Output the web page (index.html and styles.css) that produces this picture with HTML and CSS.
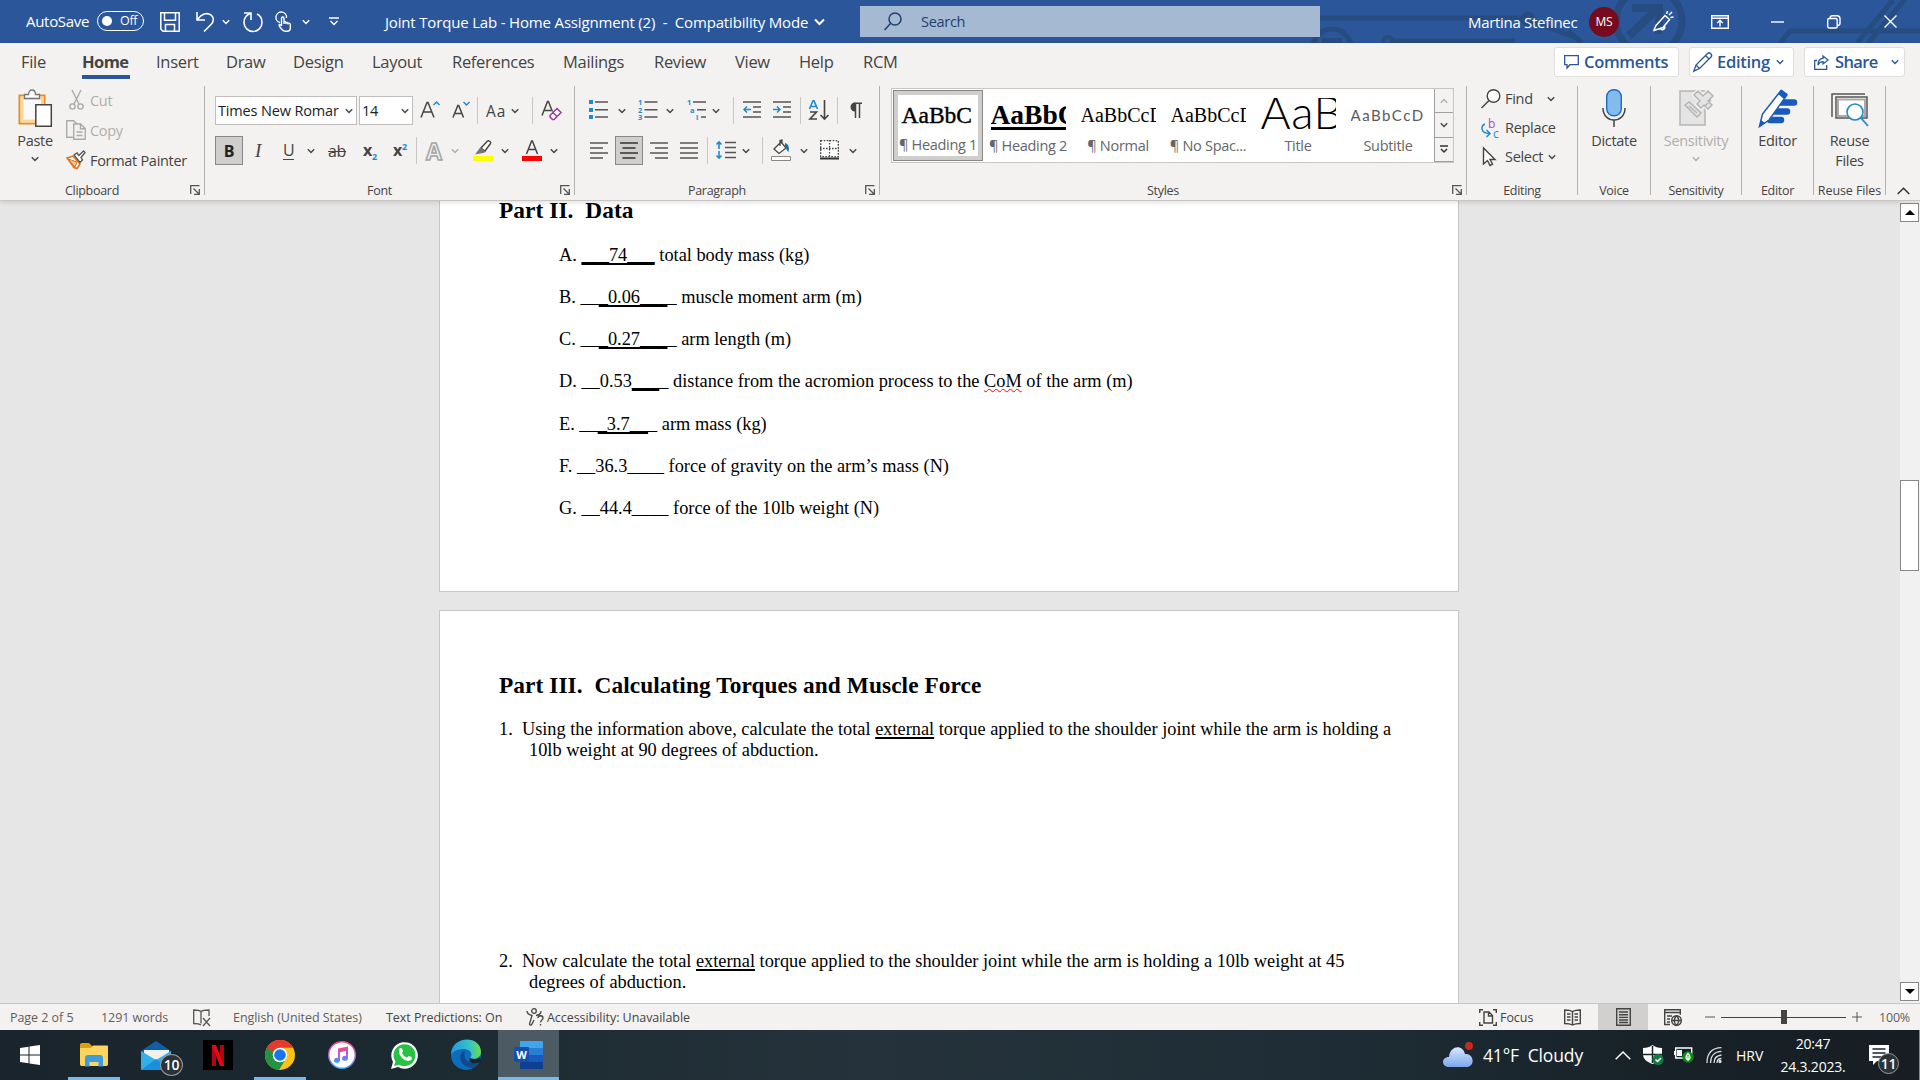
FILE: index.html
```html
<!DOCTYPE html>
<html lang="en">
<head>
  <meta charset="utf-8" />
  <title>Joint Torque Lab - Home Assignment (2)</title>
  <link rel="stylesheet" href="styles.css">
</head>
<body>
  <svg class="defs">
    <symbol id="chev" viewBox="0 0 8 6"><path d="M.8 1.2 4 4.4 7.2 1.2" fill="none" stroke="currentColor" stroke-width="1.4"/></symbol>
    <symbol id="launch" viewBox="0 0 10 10"><path d="M.7 9V.7H9.5M3.5 3.5l5.5 5.5M9.3 4v5.3H4" fill="none" stroke="#555" stroke-width="1.3"/></symbol>
  </svg>

  <div class="titlebar">
    <svg class="circuit" width="620" height="43" viewBox="0 0 620 43" fill="none" stroke="#264c80" stroke-width="5">
      <path d="M20 18H222M268 31l14 12M90 41h125"/>
      <circle cx="32" cy="48" r="19"/><path d="M22 41h20" stroke-width="6"/>
      <circle cx="88" cy="42" r="5" stroke-width="4"/><circle cx="228" cy="19" r="5"/>
      <path d="M234 22l40 15"/>
      <circle cx="349" cy="21" r="33" stroke-width="7"/>
      <path d="M332 8h27v26M357 9l-28 27" stroke-width="8"/>
      <path d="M480 43l10-12h132M557 43l36-43M568 43l42-50"/>
    </svg>
    <span class="autosave">AutoSave</span>
    <span class="toggle"><i></i>Off</span>
    <svg width="20" height="20" fill="none" stroke="#fff" stroke-width="1.5"><path d="M.8.8h18.4v18.4H3L.8 17zM4.5.8v7.5h11V.8M5.5 19v-6.500h9V19"/></svg>
    <svg width="19" height="20" fill="none" stroke="#fff" stroke-width="1.6"><path d="M1 0v8h8M1.500 7.500C5 2 11 0 15 3c4 3.500 2 7.500 0 9.500L8 19.500"/></svg>
    <svg class="chev" width="8" height="6"><use href="#chev"/></svg>
    <svg width="20" height="20" fill="none" stroke="#fff" stroke-width="1.6"><path d="M1 1h7v7M7.500 1.500C3 3 1 6 1 10.500a9 9 0 0 0 18 0c0-4-2-7-5-8.500"/></svg>
    <svg width="16" height="20" fill="none" stroke="#fff" stroke-width="1.400"><path d="M4 10.500A5.300 5.300 0 1 1 10.500 6M5.500 14V6.500c0-2 2.500-2 2.500 0V12M8 11c0-1.800 2-1.500 2 0v1M10 11.500c0-1.500 2-1.200 2 0v1M12 12c0-1.500 2.300-1 2.300 .5V16c0 2-1.300 3.300-3 3.300H9C7 19.300 3 14.500 3 13c.5-.8 1.500-.5 2.500 1"/></svg>
    <svg class="chev" width="8" height="6"><use href="#chev"/></svg>
    <svg width="10" height="9" fill="none" stroke="#fff" stroke-width="1.400"><path d="M0 1h10M1.500 4 5 7.500 8.500 4"/></svg>
    <span class="doc-name">Joint Torque Lab - Home Assignment (2) &nbsp;-&nbsp; Compatibility Mode</span>
    <svg class="chev" width="11" height="8"><path d="M1 1.500l4.500 4.500L10 1.500" fill="none" stroke="#fff" stroke-width="2"/></svg>
    <div class="search">
      <svg width="18" height="19" fill="none" stroke="#1e4072" stroke-width="1.500"><circle cx="11" cy="7" r="6"/><path d="M6.500 11.500.5 18"/></svg>
      <span>Search</span>
    </div>
    <span class="user">Martina Stefinec</span>
    <span class="avatar">MS</span>
    <svg width="21" height="21" fill="none" stroke="#fff" stroke-width="1.500"><path d="M1 19 3 14.500 12 4.500l4.500 4L10 16.500 1 19.500zM7.500 17.500c1 2 4.500 1.500 4.500-2M13.500 3l1-3M16 4l3-3M17.500 6.500l3-.5"/></svg>
    <svg width="18" height="14" fill="none" stroke="#fff" stroke-width="1.400"><path d="M.7.7h16.600v12.600H.7zM.7 3.200h16.600M9 11.500V5.500M6.300 8 9 5.300 11.700 8"/></svg>
    <svg width="13" height="2"><path d="M0 1h13" stroke="#fff" stroke-width="1.400"/></svg>
    <svg width="14" height="14" fill="none" stroke="#fff" stroke-width="1.400"><rect x=".7" y="3.500" width="9.500" height="9.500" rx="1.500"/><path d="M3 3.500C3 1.500 4 .7 5.500.7H10c2 0 3 1 3 3V8c0 1.500-1 2.500-2.500 2.500"/></svg>
    <svg width="13" height="13"><path d="M.5.500l12 12M12.500.5l-12 12" stroke="#fff" stroke-width="1.400"/></svg>
  </div>

  <div class="ribbon">
    <div class="tabs">
      <span>File</span><span class="active">Home</span><span>Insert</span><span>Draw</span><span>Design</span><span>Layout</span><span>References</span><span>Mailings</span><span>Review</span><span>View</span><span>Help</span><span>RCM</span>
      <div class="actions">
        <span class="action comments"><svg width="15" height="14" fill="none" stroke="#2b579a" stroke-width="1.300"><path d="M.7.7h13.600v9H6L3 13V9.700H.7z"/></svg><b>Comments</b></span>
        <span class="action editing"><svg width="20" height="20" fill="none" stroke="#2b579a" stroke-width="1.300"><path d="M.8 19.200 3 13 14.500 1.500c2-2 5.500 1.500 3.500 3.500L6.500 16.500zM3 13l3.500 3.500M12.500 3.500 16 7"/></svg><b>Editing</b><svg class="chev" width="8" height="6"><use href="#chev"/></svg></span>
        <span class="action share"><svg width="15" height="15" fill="none" stroke="#2b579a" stroke-width="1.300"><path d="M3 5.500H.7v8.800h12V10M9 1l5 4-5 4V6.700C6.500 6.700 5 8 4 10c0-4 2-6.500 5-6.700z"/></svg><b>Share</b><svg class="chev" width="8" height="6"><use href="#chev"/></svg></span>
      </div>
    </div>

    <div class="groups">
      <div class="group clipboard">
        <div class="tools">
          <div class="big">
            <svg width="35" height="38" fill="none"><path d="M1.500 6.500h25v28h-25z" fill="#fafafa" stroke="#e8892b" stroke-width="2"/><path d="M4 9h20.500v23H4z" stroke="#fbd78c" stroke-width="3"/><path d="M6.500 9.500v-4h4c0-6 7-6 7 0h4v4z" fill="#fafafa" stroke="#777" stroke-width="1.300"/><path d="M17.800 15.700h15.500v21.500H17.800z" fill="#fff" stroke="#444" stroke-width="1.500"/></svg>
            <span>Paste</span>
            <svg class="chev" width="8" height="6"><use href="#chev"/></svg>
          </div>
          <div class="clip-list">
            <span class="off"><svg width="20" height="20" fill="none" stroke="#aaa" stroke-width="1.400"><path d="M6 0l7 14M15 0 8 14"/><circle cx="6.500" cy="16.500" r="2.600"/><circle cx="14.500" cy="16.500" r="2.600"/></svg>Cut</span>
            <span class="off"><svg width="20" height="20" fill="#f3f2f1" stroke="#aaa" stroke-width="1.400"><path d="M.7.700h7l3 3v13.500H.7z"/><path d="M7.700 4h7l4.500 4.500v10.700H7.700zM14.500 4v4.700h4.700M10.500 12h6M10.500 15.500h6"/></svg>Copy</span>
            <span><svg width="20" height="20" fill="none"><path d="M1 8l6-2 7 8-3 4.500-3-1z" fill="#fff" stroke="#e0701a" stroke-width="1.500"/><path d="M2 9l9 3-2 5z" fill="#f9c98c" stroke="#e0701a"/><path d="M8 5l3-2 2 2.500L17.500 1 19 2.500 15 7.500l1.500 2.500-2.500 2.500z" fill="#fff" stroke="#555" stroke-width="1.400"/></svg>Format Painter</span>
          </div>
        </div>
        <div class="caption">Clipboard<svg class="launch" width="10" height="10"><use href="#launch"/></svg></div>
      </div>

      <div class="group font">
        <div class="tools rows">
          <div class="row font-row1">
            <span class="combo name">Times New Romar<svg class="chev" width="8" height="6"><use href="#chev"/></svg></span>
            <span class="combo size">14<svg class="chev" width="8" height="6"><use href="#chev"/></svg></span>
            <svg width="20" height="20" fill="none"><path d="M1 17.500 7 2.500h1l6 15M3.300 12h8.500" stroke="#444" stroke-width="1.500"/><path d="M13.500 5l3-3 3 3" stroke="#1e8bcd" stroke-width="1.500"/></svg>
            <svg width="20" height="20" fill="none"><path d="M1 17.500 5.800 5.500h.9l4.800 12M2.500 13.500h7.500" stroke="#444" stroke-width="1.500"/><path d="M11.500 2l3 3 3-3" stroke="#1e8bcd" stroke-width="1.500"/></svg>
            <i class="sep"></i>
            <span class="aa">Aa</span>
            <svg class="chev" width="8" height="6"><use href="#chev"/></svg>
            <i class="sep"></i>
            <svg width="21" height="20" fill="none"><path d="M1 15.500 6.500 1.500h.9l4 10M3 10.500h7" stroke="#444" stroke-width="1.500"/><path d="M9 15.500l7-7 4 4-7 7H11.500L9 17zM12 12.500l4 4" fill="#fff" stroke="#9b35a5" stroke-width="1.500"/></svg>
          </div>
          <div class="row font-row2">
            <span class="bold pressed">B</span>
            <span class="italic">I</span>
            <span class="under">U</span>
            <svg class="chev" width="8" height="6"><use href="#chev"/></svg>
            <span class="strike">ab</span>
            <span class="script">x<sub>2</sub></span>
            <span class="script">x<sup>2</sup></span>
            <i class="sep"></i>
            <span class="outline">A</span>
            <svg class="chev off" width="8" height="6"><use href="#chev"/></svg>
            <svg width="20" height="22"><path d="M0 17h20v5H0z" fill="#ff0"/><path d="M8 9l6.500-7c1-1 4 1 3 2.500L12 12z" fill="#fff" stroke="#444" stroke-width="1.400"/><path d="M7.500 8 13 13l-3 1-8 1.500z" fill="#777"/></svg>
            <svg class="chev" width="8" height="6"><use href="#chev"/></svg>
            <svg width="20" height="22"><path d="M0 17h20v5H0z" fill="#f00"/><path d="M4.500 15 9.600 2h.8l5.100 13M6.500 10.500h7" fill="none" stroke="#444" stroke-width="1.500"/></svg>
            <svg class="chev" width="8" height="6"><use href="#chev"/></svg>
          </div>
        </div>
        <div class="caption">Font<svg class="launch" width="10" height="10"><use href="#launch"/></svg></div>
      </div>

      <div class="group para">
        <div class="tools rows">
          <div class="row para-row1">
            <svg width="20" height="20"><path d="M0 0h4v4H0zM0 8h4v4H0zM0 15h4v4H0z" fill="#1e8bcd"/><path d="M6 2h13M6 9.700h13M6 17h13" stroke="#555" stroke-width="1.500"/></svg>
            <svg class="chev" width="8" height="6"><use href="#chev"/></svg>
            <svg width="20" height="20"><text x="0" y="5" class="tiny">1</text><text x="0" y="12.500" class="tiny">2</text><text x="0" y="19.500" class="tiny">3</text><path d="M6.500 2h13M6.500 9.700h13M6.500 17h13" stroke="#555" stroke-width="1.500"/></svg>
            <svg class="chev" width="8" height="6"><use href="#chev"/></svg>
            <svg width="20" height="20"><text x="0" y="5" class="tiny">1</text><text x="3" y="12.500" class="tiny">a</text><text x="9" y="19.500" class="tiny">i</text><path d="M6 2h13M10 9.700h9M14 17h5" stroke="#555" stroke-width="1.500"/></svg>
            <svg class="chev" width="8" height="6"><use href="#chev"/></svg>
            <i class="sep"></i>
            <svg width="18" height="20" fill="none"><path d="M0 2h18M10 7h8M10 12h8M0 17h18" stroke="#555" stroke-width="1.500"/><path d="M1 9.500h7M4 6.500l-3 3 3 3" stroke="#1e8bcd" stroke-width="1.500"/></svg>
            <svg width="18" height="20" fill="none"><path d="M0 2h18M10 7h8M10 12h8M0 17h18" stroke="#555" stroke-width="1.500"/><path d="M0 9.500h7M4 6.500l3 3-3 3" stroke="#1e8bcd" stroke-width="1.500"/></svg>
            <i class="sep"></i>
            <svg width="20" height="20" fill="none"><path d="M.5 9 4 .7h1L8.500 9M2 6.500h5" stroke="#1e8bcd" stroke-width="1.600"/><path d="M1 12h6.500L1 19h7M15.500 0v19M11.500 15l4 4 4-4" stroke="#444" stroke-width="1.600"/></svg>
            <i class="sep"></i>
            <svg width="14" height="17"><path d="M6 9.500a4.500 4.500 0 0 1 0-9z" fill="#444"/><path d="M5 1.200h8M6.500 1v15M10.500 1v15" stroke="#444" stroke-width="1.500"/></svg>
          </div>
          <div class="row para-row2">
            <svg width="19" height="17"><path d="M1 1h18M1 6h13M1 11h18M1 16h13" stroke="#555" stroke-width="1.600"/></svg>
            <span class="pressed"><svg width="18" height="17"><path d="M0 1h18M2.500 6h13M0 11h18M2.500 16h13" stroke="#333" stroke-width="1.600"/></svg></span>
            <svg width="18" height="17"><path d="M0 1h18M5 6h13M0 11h18M5 16h13" stroke="#555" stroke-width="1.600"/></svg>
            <svg width="18" height="17"><path d="M0 1h18M0 6h18M0 11h18M0 16h18" stroke="#555" stroke-width="1.600"/></svg>
            <i class="sep"></i>
            <svg width="20" height="18" fill="none"><path d="M9 1.500h11M9 6.500h11M9 11.500h11M9 16.500h11" stroke="#555" stroke-width="1.500"/><path d="M3 1v7M3 10v7M.5 3.500 3 1l2.500 2.500M.5 14.500 3 17l2.500-2.500" stroke="#1e8bcd" stroke-width="1.600"/></svg>
            <svg class="chev" width="8" height="6"><use href="#chev"/></svg>
            <i class="sep"></i>
            <svg width="20" height="22" fill="none"><path d="M.5 17.500h19v4H.5z" fill="#fff" stroke="#888"/><path d="M3 10 10 3l5 6-7 5.500zM9 7V1.500l2-.5v4" fill="#fff" stroke="#444" stroke-width="1.300"/><path d="M14 4c4 1 4.500 5 3.500 9-1.500-1-2.500-4-3.500-6z" fill="#1e6fae"/></svg>
            <svg class="chev" width="8" height="6"><use href="#chev"/></svg>
            <svg width="19" height="20"><path d="M.7.700h17.600v16H.7zM9.500 0v17M0 8.500h19" fill="#fff" stroke="#444" stroke-width="1.300" stroke-dasharray="1.600 1.400"/><path d="M0 18.500h19" stroke="#333" stroke-width="2"/></svg>
            <svg class="chev" width="8" height="6"><use href="#chev"/></svg>
          </div>
        </div>
        <div class="caption">Paragraph<svg class="launch" width="10" height="10"><use href="#launch"/></svg></div>
      </div>

      <div class="group styles">
        <div class="tools">
          <div class="gallery">
            <div class="style selected"><span class="sample h1">AaBbC</span><span class="style-name">¶ Heading 1</span></div>
            <div class="style"><span class="sample h2">AaBbC</span><span class="style-name">¶ Heading 2</span></div>
            <div class="style"><span class="sample normal">AaBbCcD</span><span class="style-name">¶ Normal</span></div>
            <div class="style"><span class="sample normal">AaBbCcD</span><span class="style-name">¶ No Spac...</span></div>
            <div class="style"><span class="sample title">AaB</span><span class="style-name">Title</span></div>
            <div class="style"><span class="sample subtitle">AaBbCcD</span><span class="style-name">Subtitle</span></div>
            <div class="gallery-nav">
              <span class="off"><svg class="up" width="8" height="6"><use href="#chev"/></svg></span>
              <span><svg width="8" height="6"><use href="#chev"/></svg></span>
              <span><svg width="10" height="9" fill="none" stroke="#333" stroke-width="1.500"><path d="M1 1h8M2 4l3 3 3-3"/></svg></span>
            </div>
          </div>
        </div>
        <div class="caption">Styles<svg class="launch" width="10" height="10"><use href="#launch"/></svg></div>
      </div>

      <div class="group edit">
        <div class="tools edit-list">
          <span><svg width="20" height="20" fill="#fff" stroke="#444" stroke-width="1.400"><circle cx="12.500" cy="7" r="6.300"/><path d="M8 11.500.5 19"/></svg>Find<svg class="chev find-chev" width="8" height="6"><use href="#chev"/></svg></span>
          <span><svg width="20" height="20" fill="none"><text x="7" y="10" class="rep-b">b</text><text x="12" y="19.500" class="rep-c">c</text><path d="M4 6C-.5 8-.5 15 8 15.500M5.500 12l3.500 3.500L5.500 19" stroke="#1e8bcd" stroke-width="1.500"/></svg>Replace</span>
          <span><svg width="20" height="20"><path d="M2.500 1v16l4-3.500 2.500 5 2.500-1.200L9 12.500h5z" fill="#fff" stroke="#444" stroke-width="1.400"/></svg>Select<svg class="chev select-chev" width="8" height="6"><use href="#chev"/></svg></span>
        </div>
        <div class="caption">Editing</div>
      </div>

      <div class="group voice">
        <div class="tools big">
          <svg width="24" height="38" fill="none"><rect x="4.700" y=".7" width="14.600" height="26" rx="7" fill="#83bbec" stroke="#1b6ec2" stroke-width="1.400"/><path d="M1 19c0 16 22 16 22 0M12 31v7" stroke="#444" stroke-width="1.500"/></svg>
          <span>Dictate</span>
        </div>
        <div class="caption">Voice</div>
      </div>

      <div class="group sens">
        <div class="tools big off">
          <svg width="35" height="38" fill="#e4e4e4" stroke="#b5b5b5" stroke-width="1.500"><path d="M1 2h25v34H1z"/><path d="M6 16l4-3 12 11-4 4zM10 17l8 7"/><path d="M15 6l4-4 5 5 5-5 5 5-5 5 4 4-4 4-4-4-3 3-4-4 3-3z" stroke="#f3f2f1" stroke-width="4"/><path d="M15 6l4-4 5 5 5-5 5 5-5 5 4 4-4 4-4-4-3 3-4-4 3-3zM26 17l6-6"/></svg>
          <span>Sensitivity</span>
          <svg class="chev" width="8" height="6"><use href="#chev"/></svg>
        </div>
        <div class="caption">Sensitivity</div>
      </div>

      <div class="group editor">
        <div class="tools big">
          <svg width="39" height="39"><path d="M20 13.500h16M17 22.500h12M12 31h11" stroke="#185abd" stroke-width="6.500" stroke-linecap="round"/><path d="M1.500 37.500 4.500 25 23 1.500l6 4.500L11 31z" fill="#fff" stroke="#185abd" stroke-width="1.500"/><path d="M20 5l3.500-4.500 6 4.500L26 10zM1 38l2-7 4 3z" fill="#185abd"/></svg>
          <span>Editor</span>
        </div>
        <div class="caption">Editor</div>
      </div>

      <div class="group reuse">
        <div class="tools big">
          <svg width="38" height="38" fill="none"><path d="M1 26V3h33" stroke="#555" stroke-width="1.500"/><path d="M5 27V6h31v21z" fill="#fff" stroke="#555" stroke-width="1.500"/><path d="M7 8.500h27v16.500h-27z" stroke="#aaa" stroke-width="2"/><circle cx="24" cy="21" r="8" fill="#fff" stroke="#1e8bcd" stroke-width="1.600"/><path d="M30 27l7 8" stroke="#1e8bcd" stroke-width="1.800"/></svg>
          <span>Reuse<br>Files</span>
        </div>
        <div class="caption">Reuse Files</div>
      </div>
      <svg class="collapse" width="13" height="8"><path d="M.7 7 6.500 1.200 12.300 7" fill="none" stroke="#333" stroke-width="1.500"/></svg>
    </div>
  </div>

  <div class="workspace">
    <div class="pages">
      <div class="page page-top">
        <h2>Part II.&nbsp; Data</h2>
        <ol class="data">
          <li>A. <u>___74___</u> total body mass (kg)</li>
          <li>B. __<u>_0.06___</u>_ muscle moment arm (m)</li>
          <li>C. __<u>_0.27___</u>_ arm length (m)</li>
          <li>D. __0.53<u>___</u>_ distance from the acromion process to the <span class="typo">CoM</span> of the arm (m)</li>
          <li>E. __<u>_3.7__</u>_ arm mass (kg)</li>
          <li>F. __36.3____ force of gravity on the arm’s mass (N)</li>
          <li>G. __44.4____ force of the 10lb weight (N)</li>
        </ol>
      </div>
      <div class="page page-next">
        <h2>Part III.&nbsp; Calculating Torques and Muscle Force</h2>
        <p>1.&nbsp; Using the information above, calculate the total <u>external</u> torque applied to the shoulder joint while the arm is holding a<br>10lb weight at 90 degrees of abduction.</p>
        <p>2.&nbsp; Now calculate the total <u>external</u> torque applied to the shoulder joint while the arm is holding a 10lb weight at 45<br>degrees of abduction.</p>
      </div>
    </div>
    <div class="scrollbar">
      <span class="arrow"><svg width="10" height="5"><path d="M5 0l5 5H0z"/></svg></span>
      <span class="thumb"></span>
      <span class="arrow"><svg width="10" height="5"><path d="M0 0h10L5 5z"/></svg></span>
    </div>
  </div>

  <div class="statusbar">
    <span>Page 2 of 5</span>
    <span>1291 words</span>
    <svg width="19" height="17" fill="none" stroke="#555" stroke-width="1.300"><path d="M8 2.500v12M8 2.500C6 1 3 1 .7 1v13.500C3 14.500 6 14.500 8 16M8 2.500C10 1 13 1 16 1v6M10 9l7 8M17 9l-7 8"/></svg>
    <span>English (United States)</span>
    <span class="dark">Text Predictions: On</span>
    <svg width="18" height="18" fill="none" stroke="#444" stroke-width="1.300"><circle cx="8" cy="3" r="2.300"/><path d="M1 3c0 3 3 4 5 4.500L3.500 16c0 1.500 2 1.500 2.500 0l2-4M15 3c0 3-2 4-5 4.500M12 10c0-3 5-3 5 0 0 2-2.500 2-2.500 4.500M14.500 16v1.500"/></svg>
    <span class="dark">Accessibility: Unavailable</span>
    <svg class="focus-icon" width="18" height="17" fill="none" stroke="#444" stroke-width="1.400"><path d="M4 .7H.7V4M14 .7h3.300V4M4 16.300H.7V13M14 16.300h3.300V13M5 3h5l3.500 3.500V14H5zM9.500 3v4h4"/></svg>
    <span class="dark">Focus</span>
    <svg width="17" height="17" fill="none" stroke="#444" stroke-width="1.400"><path d="M8.500 2.500C6 1 3 1 .7 1v13.500c3 0 5 0 7.800 1.500 2.800-1.500 5-1.500 7.800-1.500V1C14 1 11 1 8.500 2.500zV16M3 5h3.500M3 8h3.500M3 11h3.500M10.500 5H14M10.500 8H14M10.500 11H14"/></svg>
    <span class="view-on"><svg width="15" height="18" fill="none" stroke="#444" stroke-width="1.400"><path d="M.7.700h13.600v16.600H.7zM3 4h9M3 6.700h9M3 9.400h9M3 12h9M3 14.500h9"/></svg></span>
    <svg width="18" height="17" fill="none" stroke="#444" stroke-width="1.400"><path d="M6 15.500H.7V.7h15.600v5M.7 3.500h15.600M3 7h5M3 10h3M3 13h3"/><circle cx="12.500" cy="11.500" r="4.800"/><path d="M7.700 11.500h9.600M12.500 6.700c-3 3-3 6.500 0 9.600 3-3 3-6.500 0-9.600"/></svg>
    <svg width="10" height="2"><path d="M0 1h10" stroke="#555"/></svg>
    <span class="slider"><i></i></span>
    <svg width="10" height="10"><path d="M0 5h10M5 0v10" stroke="#555"/></svg>
    <span class="zoom">100%</span>
  </div>

  <div class="taskbar">
    <span class="app win"><svg width="20" height="20" fill="#fff"><path d="M0 3l8.500-1.200v7.700H0zM9.500 1.600 20 0v9.500H9.500zM0 10.500h8.500v7.700L0 17zM9.500 10.500H20V20L9.500 18.400z"/></svg></span>
    <span class="app running"><svg width="28" height="24"><path d="M0 2c0-1 .5-2 2-2h7l3 3v3H0z" fill="#e09d0c"/><path d="M0 5h11l2-2.500h14c.7 0 1 .5 1 1V21c0 1.500-1 2-2 2H2c-1.500 0-2-1-2-2z" fill="#fdd45c"/><path d="M5 23.500V15c0-2 1-3 3-3h12c2 0 3 1 3 3v8.500h-4.500V19h-9v4.500z" fill="#3f9be0"/></svg></span>
    <span class="app"><svg width="30" height="29"><path d="M0 10 15 0l15 10v18H0z" fill="#0f5ea8"/><path d="M3 9h25v10H3z" fill="#f0f0f0"/><path d="M0 10l15 9 15-9v19H0z" fill="#32b0ea"/><path d="M0 29 15 18l15 11z" fill="#1a8fdc"/></svg><b class="badge">10</b></span>
    <span class="app"><span class="netflix"><svg width="12" height="21"><path d="M0 0h4v21H0zM8 0h4v21H8z" fill="#b1060f"/><path d="M0 0h4l8 21H8z" fill="#e50914"/></svg></span></span>
    <span class="app running"><svg width="30" height="30"><circle cx="15" cy="15" r="15" fill="#fbc116"/><path d="M15 15 2 7.500A15 15 0 0 1 28 7.500H15z" fill="#e33b2e"/><path d="M2 7.500A15 15 0 0 0 14 30l7-11.500-6-3.500z" fill="#229342"/><path d="M2 7.500 8.500 18 15 9z" fill="#229342"/><path d="M2 7.500A15 15 0 0 1 28 7.500H15a7.500 7.500 0 0 0-7 5z" fill="#e33b2e"/><circle cx="15" cy="15" r="7.300" fill="#fff"/><circle cx="15" cy="15" r="5.800" fill="#1a73e8"/></svg></span>
    <span class="app"><svg width="28" height="28"><defs><linearGradient id="tune" x2="0" y2="1"><stop stop-color="#fb4b72"/><stop offset=".5" stop-color="#b05ce6"/><stop offset="1" stop-color="#29a8f5"/></linearGradient></defs><circle cx="14" cy="14" r="13.300" fill="#fff" stroke="url(#tune)" stroke-width="1.400"/><path d="M10 7.500 20 5.500v12a3 2.500 0 1 1-2-2.500V10l-6 1.200V19.500a3 2.500 0 1 1-2-2.500z" fill="url(#tune)"/></svg></span>
    <span class="app"><svg width="27" height="28"><path d="M0 28l2-7a13.300 13.300 0 1 1 5 5z" fill="#fff"/><path d="M3 25l1.500-4.500a11 11 0 1 1 3.500 3.200z" fill="#29c043"/><path d="M8.500 7.500c2-1.500 3 .5 3.500 2.500.2 1-1.500 1.500-.8 2.500 1 2 2.500 3 4.500 4 1 .5 1.300-1.700 2.300-1.500 4 1.700 3 2 2.500 3.500-5 5-15-4.500-12-11z" fill="#fff"/></svg></span>
    <span class="app"><svg width="30" height="30"><defs><linearGradient id="edge" x2="1"><stop stop-color="#1e9be0"/><stop offset=".6" stop-color="#35c1c9"/><stop offset="1" stop-color="#66e04a"/></linearGradient></defs><circle cx="15" cy="15" r="15" fill="#0c6cbd"/><path d="M0 15C0-5 30-5 30 12c0 6-7 8-11 6 4-5-1-9-6-9-6 0-11 2-13 6z" fill="url(#edge)"/><path d="M14 11c-8 1-6 17 8 17 3-1 5-3 6-6-9 3-17-2-14-11z" fill="#114a8b"/><path d="M19 18c3 2 7 1 10-.5l.8 2c-.6 1.800-1 2.500-2 3-6 2-11 0-8.800-4.500z" fill="#18242c"/></svg></span>
    <span class="app running current"><svg width="29" height="28"><path d="M6 1c0-.6.400-1 1-1h21c.6 0 1 .4 1 1v6H6z" fill="#41a5ee"/><path d="M6 7h23v7H6z" fill="#2b7cd3"/><path d="M6 14h23v7H6z" fill="#185abd"/><path d="M6 21h23v6c0 .6-.4 1-1 1H7c-.6 0-1-.4-1-1z" fill="#103f91"/><rect y="6" width="15" height="15" rx="1" fill="#1550a8"/><text x="7.500" y="18" class="w">W</text></svg></span>

    <div class="tray">
      <svg width="30" height="26"><defs><linearGradient id="cloud" x2="0" y2="1"><stop stop-color="#dbe8fd"/><stop offset="1" stop-color="#7ba6ec"/></linearGradient></defs><path d="M6 25c-8 0-8-10 0-10C7 3 20 2 22 12c9-1 11 13 1 13z" fill="url(#cloud)"/><circle cx="26" cy="4" r="4" fill="#c42b1c"/></svg>
      <span class="weather">41°F&nbsp; Cloudy</span>
      <svg width="16" height="9"><path d="M.7 8.300 8 1l7.300 7.300" fill="none" stroke="#fff" stroke-width="1.500"/></svg>
      <svg width="21" height="20"><path d="M0 3c4 0 7-1 9.500-3C12 2 15 3 19 3v6c0 5-4 8-9.500 10C4 17 0 14 0 9z" fill="#fff"/><path d="M9.500 1v17M0 9.500h19" stroke="#18242c" stroke-width="1.500"/><circle cx="15" cy="14.500" r="5.500" fill="#107c41"/><path d="M12.500 14.500l2 2 3.500-3.500" fill="none" stroke="#fff" stroke-width="1.500"/></svg>
      <svg width="21" height="16"><path d="M1.700 1h16v10h-16z" fill="none" stroke="#fff" stroke-width="1.400"/><path d="M3 3h5v6H3zM0 4h1v4H0z" fill="#fff"/><circle cx="14" cy="10" r="5.700" fill="#0e8a16"/><path d="M14 6.500c3 3 2.500 6 0 6s-3-3 0-6zM14 9v5" fill="none" stroke="#fff" stroke-width="1.300"/></svg>
      <svg width="16" height="16" fill="none" stroke="#ddd" stroke-width="1.300"><path d="M1 16C1 6 6 1 15.500.7M4.500 16c0-7 4-11.500 11-11.700M8 16c0-5 3-7.500 7.500-8M11 16c0-2.500 1.500-4.500 4.500-4.500"/><circle cx="14" cy="14.500" r="1" fill="#fff"/></svg>
      <span class="lang">HRV</span>
      <span class="clock">20:47<br>24.3.2023.</span>
      <span class="notif"><svg width="20" height="20"><path d="M0 0h20v16H8l-4 4v-4H0z" fill="#fff"/><path d="M3.500 4h13M3.500 8h13M3.500 12h9" stroke="#18242c" stroke-width="1.300"/></svg><b class="badge">11</b></span>
      <i class="peek"></i>
    </div>
  </div>
</body>
</html>
```

FILE: styles.css
```css
html, body {
  margin: 0;
  padding: 0;
}

body {
  width: 1920px;
  height: 1080px;
  overflow: hidden;
  display: flex;
  flex-direction: column;
  font-family: "Open Sans", "Noto Sans", sans-serif;
  font-size: 14.5px;
  letter-spacing: -0.3px;
  color: #444;
  white-space: nowrap;
}

svg {
  display: block;
  flex: none;
  overflow: visible;
}

svg text {
  stroke: none;
}

.defs {
  position: absolute;
  width: 0;
  height: 0;
}

.chev {
  color: #444;
}

.off, .off .chev, .chev.off {
  color: #b0aeac;
}

/* title bar */
.titlebar {
  position: relative;
  height: 43px;
  background: #2b579a;
  color: #fff;
  display: grid;
  align-items: center;
  grid-template-columns: 71px 63px 36px 26px 21px 33px 26px 27px 56px 429px 46px 608px 121px 64px 58px 60px 56px 57px 30px;
  padding-left: 26px;
  font-size: 15px;
}

.titlebar > * {
  position: relative;
}

.titlebar .circuit {
  position: absolute;
  left: 1300px;
  top: 0;
  overflow: hidden;
}

.titlebar .chev {
  color: #fff;
}

.autosave {
  top: -1px;
}

.doc-name {
  letter-spacing: -0.17px;
}

.toggle {
  width: 45px;
  height: 18px;
  top: -1px;
  border: 1px solid #fff;
  border-radius: 10px;
  display: flex;
  align-items: center;
  font-size: 12.5px;
}

.toggle i {
  width: 10px;
  height: 10px;
  margin: 0 8px 0 4px;
  border-radius: 50%;
  background: #fff;
}

.search {
  width: 460px;
  height: 31px;
  display: flex;
  align-items: center;
  background: #a6b9d2;
  color: #1e4072;
  font-size: 14.5px;
}

.search svg {
  margin: 0 19px 0 24px;
}

.avatar {
  width: 30px;
  height: 30px;
  border-radius: 50%;
  background: #750b1c;
  font-size: 12px;
  line-height: 30px;
  text-align: center;
}

/* ribbon */
.ribbon {
  height: 157px;
  background: #f3f2f1;
  border-bottom: 1px solid #c8c6c4;
  position: relative;
  z-index: 1;
  box-shadow: 0 1px 5px rgba(0, 0, 0, 0.15);
}

.tabs {
  height: 43px;
  display: grid;
  grid-template-columns: 61px 74px 70px 67px 79px 80px 111px 91px 81px 64px 64px 691px 370px;
  padding-left: 21px;
  font-size: 16.500px;
  line-height: 38px;
}

.tabs .active {
  font-weight: bold;
  letter-spacing: -0.6px;
  width: 48px;
  height: 32px;
  border-bottom: 4px solid #2b579a;
}

.actions {
  display: flex;
  align-items: flex-start;
  padding-top: 4px;
}

.action {
  box-sizing: border-box;
  height: 30px;
  display: flex;
  align-items: center;
  background: #fff;
  border: 1px solid #e1dfdd;
  border-radius: 3px;
  color: #2b579a;
  line-height: 28px;
}

.action b {
  font-weight: 600;
}

.action .chev {
  color: #2b579a;
}

.comments {
  width: 125px;
  margin-right: 10px;
  padding-left: 9px;
}

.comments b { margin-left: 5px; }

.editing {
  width: 105px;
  margin-right: 10px;
  padding-left: 3px;
}

.editing b { margin: 0 6px 0 4px; }

.share {
  width: 101px;
  padding-left: 9px;
}

.share b {
  margin: 0 13px 0 6px;
  letter-spacing: -0.6px;
}

.groups {
  display: flex;
  height: 109px;
}

.group {
  box-sizing: border-box;
  border-right: 1px solid #b3b0ad;
  display: flex;
  flex-direction: column;
}

.clipboard { width: 205px; }
.font { width: 370px; }
.para { width: 305px; }
.styles { width: 587px; }
.edit { width: 111px; }
.voice { width: 73px; }
.sens { width: 91px; }
.editor { width: 72px; }
.reuse { width: 72px; }

.tools {
  height: 95px;
}

.caption {
  position: relative;
  height: 14px;
  line-height: 20px;
  font-size: 12.5px;
  text-align: center;
}

.clipboard .caption, .font .caption, .para .caption, .styles .caption {
  padding-right: 20px;
}

.reuse .caption {
  letter-spacing: -0.1px;
}

.launch {
  position: absolute;
  right: 4px;
  top: 4px;
}

.big {
  display: flex;
  flex-direction: column;
  align-items: center;
  line-height: 20px;
}

.tools.big {
  padding-top: 3px;
  height: 92px;
}

.big > svg:first-child {
  height: 39px;
}

.big span {
  margin-top: 3px;
  text-align: center;
}

.big .chev {
  margin-top: 5px;
}

.reuse .big > svg:first-child {
  margin-top: 2px;
  height: 37px;
}

.clipboard .tools {
  display: flex;
}

.clipboard .big {
  width: 66px;
  padding: 3px 0 0;
  margin-left: 2px;
}

.clip-list {
  margin: -1px 0 0 -2px;
}

.clip-list span {
  height: 30px;
  display: flex;
  align-items: center;
  gap: 4px;
}

.rows {
  padding-top: 10px;
  height: 85px;
}

.row {
  display: grid;
  align-items: center;
  height: 29px;
  margin-bottom: 11px;
  padding-left: 10px;
}

.para .row {
  padding-left: 14px;
}

.font-row1 { grid-template-columns: 144px 61px 32px 25px 9px 25px 21px 9px 20px; }
.font-row2 { grid-template-columns: 40px 28px 24px 21px 35px 30px 23px 10px 25px 22px 28px 21px 28px 8px; }
.para-row1 { grid-template-columns: 29px 20px 28px 21px 25px 21px 10px 30px 27px 9px 28px 12px 14px; }
.para-row2 { grid-template-columns: 26px 35px 30px 27px 9px 26px 20px 9px 29px 20px 29px 8px; }

.row > svg:not(.chev) {
  margin-top: -1px;
}

.sep {
  width: 1px;
  height: 27px;
  background: #c8c6c4;
}

.combo {
  box-sizing: border-box;
  height: 29px;
  padding: 0 3px 0 2px;
  border: 1px solid #c0bebc;
  background: #fff;
  color: #222;
  display: flex;
  align-items: center;
  justify-content: space-between;
}

.name { width: 142px; letter-spacing: -0.15px; }
.size { width: 54px; }

.aa {
  font-size: 15.500px;
  letter-spacing: 1px;
}

.pressed {
  box-sizing: border-box;
  width: 28px;
  height: 29px;
  border: 1px solid #888;
  background: #d0cecd;
  display: flex;
  align-items: center;
  justify-content: center;
}

.bold {
  font-weight: bold;
  font-size: 16px;
  color: #222;
}

.italic {
  font: italic 19px "Liberation Serif", serif;
}

.under {
  width: 11px;
  line-height: 18px;
  font-size: 16px;
  border-bottom: 1.500px solid #444;
}

.strike {
  font-size: 16px;
  text-decoration: line-through;
}

.script {
  font-weight: bold;
  font-size: 16px;
  line-height: 15px;
}

.script sub, .script sup {
  font-size: 9px;
  line-height: 0;
  color: #1e8bcd;
}

.outline {
  font-size: 23px;
  font-weight: bold;
  line-height: 26px;
  color: #eee;
  -webkit-text-stroke: 1.500px #a5a5a5;
}

.tiny {
  font: bold 7.500px "Open Sans", sans-serif;
  fill: #1e8bcd;
}

/* style gallery */
.gallery {
  box-sizing: border-box;
  width: 563px;
  height: 75px;
  margin: 2px 0 0 11px;
  border: 1px solid #c8c6c4;
  background: #fff;
  display: flex;
}

.style {
  box-sizing: border-box;
  width: 90px;
  height: 71px;
  margin-top: 1px;
  padding: 8px 7px 0;
  display: flex;
  flex-direction: column;
  align-items: center;
}

.style:first-child {
  margin-left: 1px;
}

.style:nth-child(6) {
  margin-right: 1px;
}

.selected {
  border: 1px solid #8a8886;
  box-shadow: inset 0 0 0 4px #d0cecd;
  padding: 7px 6px 0;
}

.sample {
  width: 75px;
  height: 34px;
  overflow: hidden;
  line-height: 34px;
  letter-spacing: 0;
  color: #000;
  font-family: "Liberation Serif", serif;
}

.h1 { font-size: 23.500px; text-indent: 1px; -webkit-text-stroke: 0.4px #000; }
.h2 { font-size: 27.500px; font-weight: bold; text-decoration: underline 3px; text-underline-offset: 3px; }
.normal { font-size: 20px; }
.title { font: 300 46px/27px Lato, sans-serif; letter-spacing: 0.5px; }
.subtitle { font: 15px/34px Lato, sans-serif; letter-spacing: 1.500px; color: #5a5a5a; }

.style-name {
  line-height: 30px;
  font-size: 14.500px;
  color: #666;
}

.gallery-nav {
  width: 19px;
  display: flex;
  flex-direction: column;
}

.gallery-nav span {
  flex: 1;
  background: #f3f2f1;
  border-left: 1px solid #a19f9d;
  border-bottom: 1px solid #a19f9d;
  display: flex;
  align-items: center;
  justify-content: center;
}

.up {
  transform: scaleY(-1);
}

.edit-list {
  margin-top: -2px;
  height: 97px;
}

.edit-list span {
  display: flex;
  align-items: center;
  height: 29px;
  padding-left: 14px;
}

.edit-list span > svg:first-child {
  margin-right: 4px;
}

.find-chev { margin-left: 14px; }
.select-chev { margin-left: 5px; }
.rep-b { font: 12px "Open Sans", sans-serif; fill: #b146c2; }
.rep-c { font: 12px "Open Sans", sans-serif; fill: #1e8bcd; }

.collapse {
  align-self: flex-end;
  margin: 0 0 0 11px;
}

/* document */
.workspace {
  height: 802px;
  background: #e6e6e6;
  display: flex;
  justify-content: space-between;
  border-bottom: 1px solid #c8c6c4;
}

.pages {
  margin-left: 439px;
  color: #000;
  font: 18.330px/21.080px "Liberation Serif", "Times New Roman", serif;
  letter-spacing: 0;
}

.page {
  box-sizing: border-box;
  display: flow-root;
  width: 1020px;
  background: #fff;
  border: 1px solid #c6c6c6;
  padding-left: 59px;
}

.page-top {
  height: 391px;
  border-top: none;
  margin-bottom: 18px;
}

.page-next {
  height: 393px;
  border-bottom: none;
  padding-top: 61px;
}

.page h2 {
  margin: 0;
  font-size: 23.330px;
  line-height: 26px;
  letter-spacing: 0.08px;
}

.page-top h2 {
  margin-top: -4px;
}

.data {
  list-style: none;
  margin: 0;
  padding: 11px 0 0 60px;
}

.data li {
  height: 42.170px;
  line-height: 42px;
}

.page u {
  text-decoration-thickness: 1.500px;
  text-underline-offset: 2px;
}

.page p {
  margin: 21px 0 190px;
  padding-left: 30px;
  text-indent: -30px;
}

.typo {
  text-decoration: underline wavy #f00 1px;
}

.scrollbar {
  width: 20px;
  background: #f1f1f1;
  display: flex;
  flex-direction: column;
}

.scrollbar span {
  box-sizing: border-box;
  width: 19px;
  border: 1px solid #888;
  background: #fff;
}

.scrollbar .arrow {
  height: 19px;
  margin: 2px 0;
  display: flex;
  align-items: center;
  justify-content: center;
}

.scrollbar .thumb {
  height: 91px;
  margin: 256px 0 auto;
}

/* status bar */
.statusbar {
  height: 26px;
  background: #f3f2f1;
  display: grid;
  align-items: center;
  grid-template-columns: 91px 92px 40px 153px 140px 21px 932px 21px 64px 34px 66px 41px 16px 131px 27px 40px;
  padding-left: 10px;
  font-size: 12.500px;
  letter-spacing: -0.05px;
  color: #605e5c;
}

.dark {
  color: #444;
}

.view-on {
  width: 50px;
  height: 26px;
  background: #d2d0ce;
  display: flex;
  align-items: center;
  justify-content: center;
}

.slider {
  width: 125px;
  height: 1px;
  background: #444;
  display: flex;
  align-items: center;
  justify-content: center;
}

.slider i {
  width: 6px;
  height: 14px;
  background: #444;
}

.zoom {
  letter-spacing: -0.2px;
}

/* taskbar */
.taskbar {
  height: 50px;
  background: linear-gradient(90deg, #1a242c, #1b2930 20%, #25323b 45%, #1e2d35 70%, #182229 85%, #171d23);
  color: #fff;
  display: flex;
}

.app {
  box-sizing: border-box;
  width: 52px;
  margin-right: 10px;
  height: 50px;
  position: relative;
  display: flex;
  align-items: center;
  justify-content: center;
}

.win {
  width: 60px;
  margin-right: 8px;
}

.running {
  border-bottom: 3px solid #76b9ed;
  padding-top: 3px;
}

.current {
  width: 61px;
  margin-left: -4px;
  background: #4c5a63;
}

.badge {
  box-sizing: border-box;
  position: absolute;
  left: 30px;
  top: 24px;
  width: 23px;
  height: 22px;
  border: 1px solid #999;
  border-radius: 50%;
  background: #2b3238;
  font: 600 14px/20px "Open Sans", sans-serif;
  text-align: center;
}

.netflix {
  width: 30px;
  height: 30px;
  background: #000;
  display: flex;
  align-items: center;
  justify-content: center;
}

.w {
  font: bold 11px "Open Sans", sans-serif;
  fill: #fff;
  text-anchor: middle;
}

.tray {
  margin-left: auto;
  width: 477px;
  display: grid;
  align-items: center;
  grid-template-columns: 40px 132px 28px 31px 32px 30px 42px 81px 48px 13px;
}

.weather {
  font-size: 17.500px;
  letter-spacing: -0.15px;
}

.lang {
  font-size: 14px;
  letter-spacing: 0;
}

.clock {
  width: 70px;
  font-size: 14px;
  line-height: 23px;
  letter-spacing: -0.2px;
  text-align: center;
}

.notif {
  position: relative;
  padding-left: 10px;
}

.notif .badge {
  left: 19px;
  top: 8px;
  width: 21px;
  height: 21px;
}

.peek {
  width: 1px;
  height: 50px;
  margin-left: auto;
  background: #888;
}
```
